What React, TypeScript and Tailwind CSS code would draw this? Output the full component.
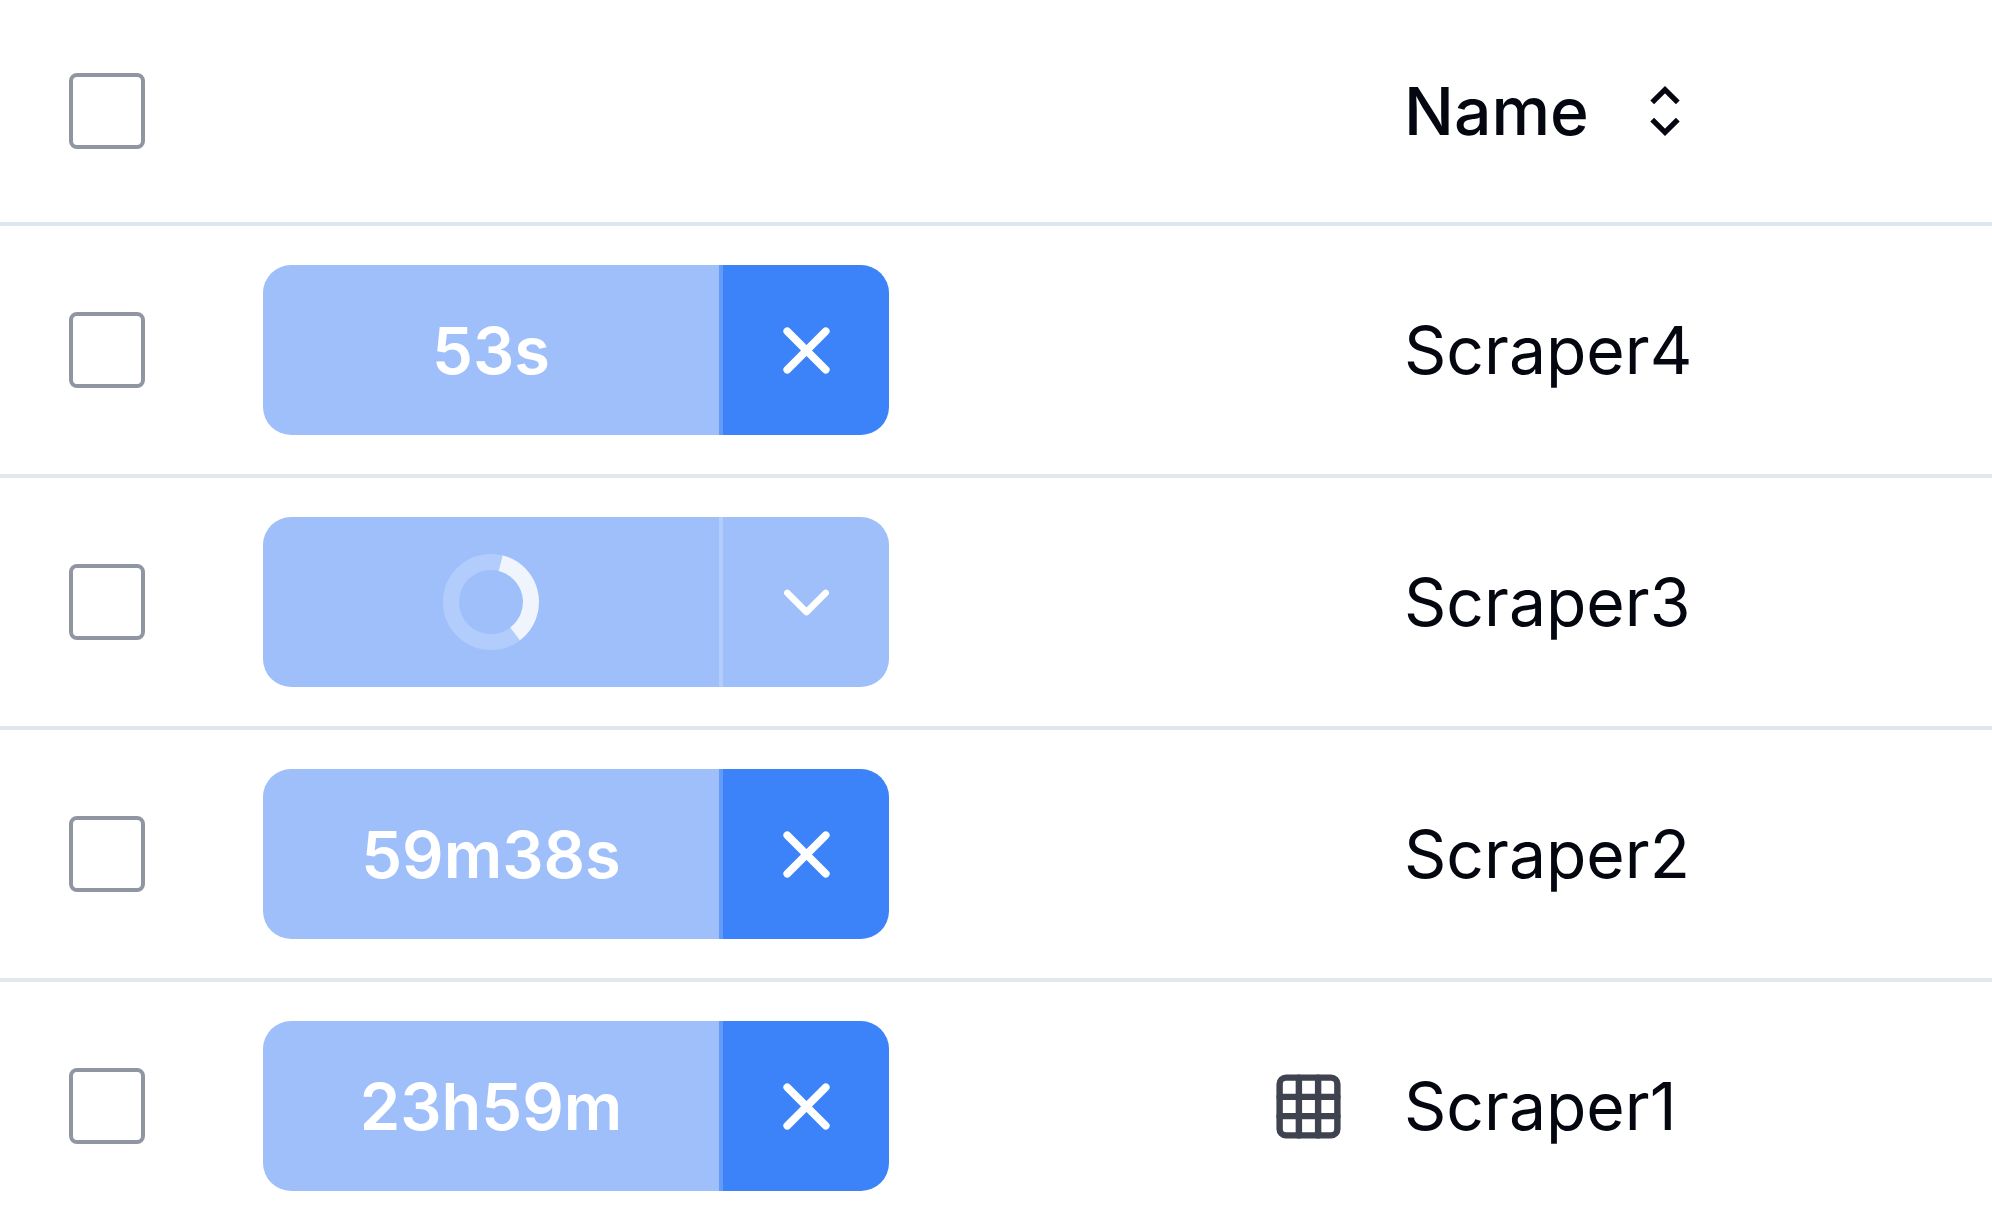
import React from 'react';
import { ChevronDown, Grid3x3, X } from 'lucide-react';

interface Scraper {
  name: string;
  status: 'running' | 'loading';
  elapsed?: string;
  hasTable?: boolean;
}

const scrapers: Scraper[] = [
  { name: 'Scraper4', status: 'running', elapsed: '53s' },
  { name: 'Scraper3', status: 'loading' },
  { name: 'Scraper2', status: 'running', elapsed: '59m38s' },
  { name: 'Scraper1', status: 'running', elapsed: '23h59m', hasTable: true },
];

const Checkbox: React.FC<{ label: string }> = ({ label }) => (
  <input
    type="checkbox"
    aria-label={label}
    className="block size-[76px] appearance-none rounded-lg border-4 border-[#8f96a1] bg-white checked:bg-blue-500"
  />
);

const Spinner: React.FC = () => (
  <svg viewBox="0 0 96 96" className="size-24" fill="none" strokeWidth="16">
    <circle cx="48" cy="48" r="40" stroke="#b2cdfb" />
    <path d="M57.7 9.2A40 40 0 0 1 72.1 79.9" stroke="#f0f4fc" />
  </svg>
);

const SortIcon: React.FC = () => (
  <svg viewBox="0 0 15 15" className="size-20" fill="none" stroke="currentColor" strokeWidth="1">
    <path d="M5.1 5.9 7.5 3.5 9.9 5.9M5.1 9.1 7.5 11.5 9.9 9.1" />
  </svg>
);

const RunButton: React.FC<{ scraper: Scraper }> = ({ scraper }) => {
  const loading = scraper.status === 'loading';
  return (
    <div className="flex h-[170px] w-[626px] overflow-hidden rounded-[28px] text-white">
      <button
        type="button"
        disabled
        aria-label={loading ? 'Loading' : undefined}
        className="flex flex-1 items-center justify-center bg-[#9fbffb] font-semibold text-[65px]"
      >
        {loading ? <Spinner /> : scraper.elapsed}
      </button>
      {loading ? (
        <button
          type="button"
          disabled
          aria-label="More options"
          className="flex w-[170px] items-center justify-center border-l-4 border-[#b2cdfb] bg-[#9fbffb]"
        >
          <ChevronDown size={77} />
        </button>
      ) : (
        <button
          type="button"
          aria-label="Cancel"
          className="flex w-[170px] items-center justify-center border-l-4 border-[#629bf9] bg-[#3c82f8]"
        >
          <X size={77} strokeWidth={2.4} />
        </button>
      )}
    </div>
  );
};

const App: React.FC = () => {
  return (
    <div className="overflow-hidden bg-white font-['Inter',sans-serif] text-[66px] leading-none text-[#04070f]">
      <table className="w-full table-fixed border-separate border-spacing-0 text-left">
        <thead>
          <tr>
            <th className="h-[226px] w-[263px] border-b-4 border-[#e0e7ef] p-0 pl-[69px]">
              <Checkbox label="Select all" />
            </th>
            <th className="w-[1013px] border-b-4 border-[#e0e7ef] p-0" />
            <th className="w-[128px] border-b-4 border-[#e0e7ef] p-0" />
            <th className="border-b-4 border-[#e0e7ef] p-0 font-medium">
              <button type="button" className="flex items-center gap-9">
                Name
                <SortIcon />
              </button>
            </th>
          </tr>
        </thead>
        <tbody>
          {scrapers.map((scraper) => (
            <tr key={scraper.name}>
              <td className="h-[252px] border-b-4 border-[#e0e7ef] p-0 pl-[69px]">
                <Checkbox label={`Select ${scraper.name}`} />
              </td>
              <td className="border-b-4 border-[#e0e7ef] p-0">
                <RunButton scraper={scraper} />
              </td>
              <td className="border-b-4 border-[#e0e7ef] p-0">
                {scraper.hasTable && <Grid3x3 size={77} className="-ml-1.5 text-[#3f434f]" />}
              </td>
              <td className="border-b-4 border-[#e0e7ef] p-0">{scraper.name}</td>
            </tr>
          ))}
        </tbody>
      </table>
    </div>
  );
};

export default App;
